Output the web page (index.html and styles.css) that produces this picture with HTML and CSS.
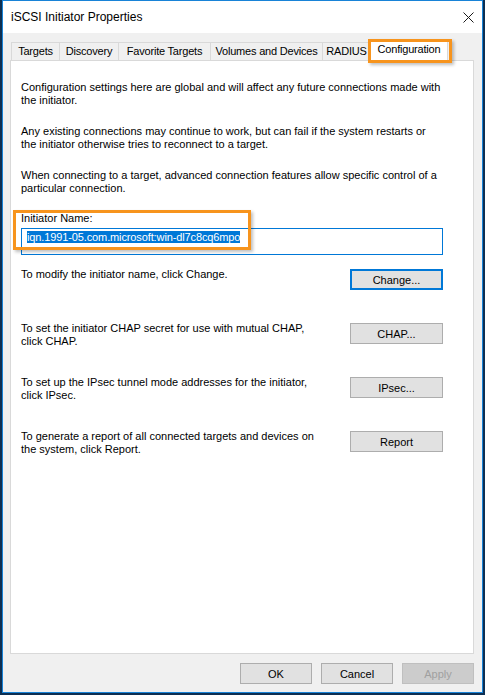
FILE: index.html
```html
<!DOCTYPE html>
<html lang="en">
<head>
    <meta charset="UTF-8">
    <meta name="viewport" content="width=device-width, initial-scale=1.0">
    <title>iSCSI Initiator Properties</title>
    <link rel="stylesheet" href="styles.css">
</head>
<body>
    <div class="window">
        <div class="titlebar">
            <span class="title">iSCSI Initiator Properties</span>
            <svg class="close" width="11" height="11" viewBox="0 0 11 11">
                <path d="M0.5 0.5 L10.5 10.5 M10.5 0.5 L0.5 10.5" stroke="#1a1a1a" stroke-width="1" fill="none"/>
            </svg>
        </div>
        <div class="body">
            <ul class="tabs">
                <li class="tab t-targets">Targets</li>
                <li class="tab t-discovery">Discovery</li>
                <li class="tab t-favorite">Favorite Targets</li>
                <li class="tab t-volumes">Volumes and Devices</li>
                <li class="tab t-radius">RADIUS</li>
                <li class="tab active">Configuration<span class="mark mark-tab"></span></li>
            </ul>
            <div class="panel">
                <p class="para">Configuration settings here are global and will affect any future connections made with<br>the initiator.</p>
                <p class="para">Any existing connections may continue to work, but can fail if the system restarts or<br>the initiator otherwise tries to reconnect to a target.</p>
                <p class="para">When connecting to a target, advanced connection features allow specific control of a<br>particular connection.</p>
                <div class="name-field">
                    <label class="label">Initiator Name:</label>
                    <div class="input"><span class="selected">iqn.1991-05.com.microsoft:win-dl7c8cq6mpo</span></div>
                    <span class="mark mark-name"></span>
                </div>
                <div class="row">
                    <p>To modify the initiator name, click Change.</p>
                    <button class="btn default">Change...</button>
                </div>
                <div class="row">
                    <p>To set the initiator CHAP secret for use with mutual CHAP,<br>click CHAP.</p>
                    <button class="btn">CHAP...</button>
                </div>
                <div class="row">
                    <p>To set up the IPsec tunnel mode addresses for the initiator,<br>click IPsec.</p>
                    <button class="btn">IPsec...</button>
                </div>
                <div class="row">
                    <p>To generate a report of all connected targets and devices on<br>the system, click Report.</p>
                    <button class="btn">Report</button>
                </div>
            </div>
            <div class="footer">
                <button class="btn small">OK</button>
                <button class="btn small">Cancel</button>
                <button class="btn small" disabled>Apply</button>
            </div>
        </div>
    </div>
</body>
</html>
```

FILE: styles.css
```css
* {
    margin: 0;
    padding: 0;
    box-sizing: border-box;
}

ul {
    list-style: none;
}

body {
    width: 485px;
    height: 695px;
    padding: 0 2px 2px 2px;
    background: #0d2f52;
    font: 11px "Liberation Sans", Arial, sans-serif;
    color: #000;
    overflow: hidden;
}

.window {
    width: 481px;
    height: 693px;
    border: 1px solid #1883d7;
    background: #f0f0f0;
    display: flex;
    flex-direction: column;
}

.titlebar {
    height: 32px;
    background: #fff;
    display: flex;
    align-items: center;
    justify-content: space-between;
    padding: 0 8px 0 8px;
}

.titlebar .title {
    font-size: 12px;
    color: #000;
}

.titlebar .close {
    margin-top: 1px;
}

.body {
    flex: 1;
    display: flex;
    flex-direction: column;
    padding: 9px 8px 8px 7px;
}

.tabs {
    display: flex;
    align-items: flex-end;
    height: 18px;
    padding-left: 1px;
}

.tab {
    height: 18px;
    line-height: 17px;
    text-align: center;
    letter-spacing: -0.2px;
    border: 1px solid #d9d9d9;
    border-bottom: none;
    margin-left: -1px;
    background: #f0f0f0;
    white-space: nowrap;
}

.tab:first-child {
    margin-left: 0;
}

.t-targets { width: 49px; }
.t-discovery { width: 60px; }
.t-favorite { width: 93px; }
.t-volumes { width: 113px; }
.t-radius { width: 49px; }

.tab.active {
    position: relative;
    z-index: 1;
    width: 78px;
    height: 22px;
    line-height: 18px;
    margin: 0 -2px -1px -1px;
    background: #fff;
}

/* orange call-out frames */
.mark {
    position: absolute;
    border: 3px solid #f7941d;
    box-shadow: 2px 2px 3px rgba(0, 0, 0, 0.25);
    pointer-events: none;
}

.mark-tab {
    left: -3px;
    top: -1px;
    right: -5px;
    bottom: -2px;
}

.panel {
    flex: 1;
    background: #fff;
    border: 1px solid #d9d9d9;
    padding: 20px 30px 0 10px;
}

.para {
    line-height: 13px;
    margin-bottom: 18px;
    white-space: nowrap;
}

.para:nth-of-type(3) {
    margin-bottom: 17px;
}

.name-field {
    position: relative;
}

.label {
    display: block;
    line-height: 13px;
}

.input {
    margin-top: 3px;
    height: 27px;
    border: 1px solid #0078d7;
    padding: 1px 0 0 5px;
    font-size: 11px;
    line-height: 14px;
    letter-spacing: -0.12px;
    white-space: nowrap;
    overflow: hidden;
}

.input .selected {
    background: #0078d7;
    color: #fff;
}

.mark-name {
    left: -8px;
    top: -2px;
    width: 238px;
    height: 40px;
}

.row {
    display: flex;
    justify-content: space-between;
    align-items: flex-start;
    height: 54px;
}

.name-field + .row {
    margin-top: 13px;
}

.row p {
    line-height: 13px;
    white-space: nowrap;
}

.btn {
    width: 93px;
    height: 21px;
    margin-top: 1px;
    background: #e1e1e1;
    border: 1px solid #adadad;
    font: 11px "Liberation Sans", Arial, sans-serif;
    color: #000;
}

.btn.default {
    border: 2px solid #0078d7;
}

.footer {
    display: flex;
    justify-content: flex-end;
    gap: 9px;
    margin-top: 9px;
}

.btn.small {
    width: 72px;
    margin-top: 0;
}

.btn:disabled {
    background: #cccccc;
    border-color: #bfbfbf;
    color: #a0a0a0;
}
```
